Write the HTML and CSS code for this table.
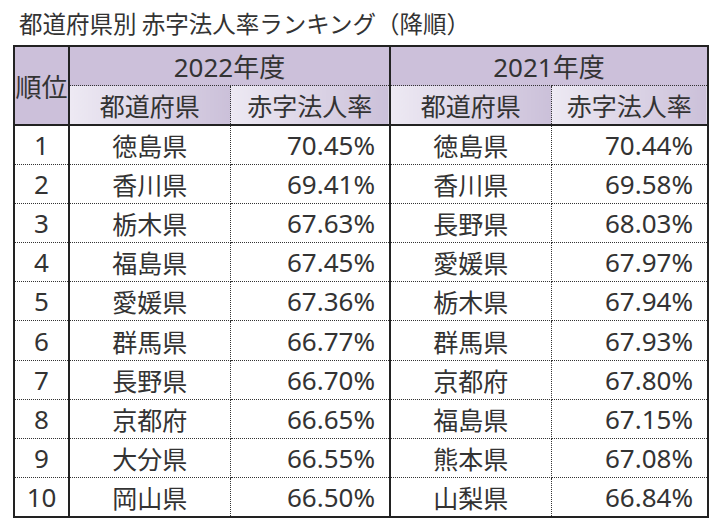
FILE: index.html
```html
<!DOCTYPE html>
<html lang="ja">
<head>
<meta charset="utf-8">
<title>都道府県別 赤字法人率ランキング（降順）</title>
<link rel="stylesheet" href="styles.css">
</head>
<body>
<h1 class="title">都道府県別 赤字法人率ランキング（降順）</h1>
<table class="rank">
  <colgroup>
    <col class="c-no">
    <col class="c-pref">
    <col class="c-rate">
    <col class="c-pref">
    <col class="c-rate2">
  </colgroup>
  <thead>
    <tr class="h1">
      <th class="rankh" rowspan="2">順位</th>
      <th class="year sep" colspan="2">2022年度</th>
      <th class="year" colspan="2">2021年度</th>
    </tr>
    <tr class="h2">
      <th class="sub">都道府県</th>
      <th class="sub sep">赤字法人率</th>
      <th class="sub">都道府県</th>
      <th class="sub">赤字法人率</th>
    </tr>
  </thead>
  <tbody>
    <tr><td class="no">1</td><td class="pref">徳島県</td><td class="rate sep">70.45%</td><td class="pref">徳島県</td><td class="rate">70.44%</td></tr>
    <tr><td class="no">2</td><td class="pref">香川県</td><td class="rate sep">69.41%</td><td class="pref">香川県</td><td class="rate">69.58%</td></tr>
    <tr><td class="no">3</td><td class="pref">栃木県</td><td class="rate sep">67.63%</td><td class="pref">長野県</td><td class="rate">68.03%</td></tr>
    <tr><td class="no">4</td><td class="pref">福島県</td><td class="rate sep">67.45%</td><td class="pref">愛媛県</td><td class="rate">67.97%</td></tr>
    <tr><td class="no">5</td><td class="pref">愛媛県</td><td class="rate sep">67.36%</td><td class="pref">栃木県</td><td class="rate">67.94%</td></tr>
    <tr><td class="no">6</td><td class="pref">群馬県</td><td class="rate sep">66.77%</td><td class="pref">群馬県</td><td class="rate">67.93%</td></tr>
    <tr><td class="no">7</td><td class="pref">長野県</td><td class="rate sep">66.70%</td><td class="pref">京都府</td><td class="rate">67.80%</td></tr>
    <tr><td class="no">8</td><td class="pref">京都府</td><td class="rate sep">66.65%</td><td class="pref">福島県</td><td class="rate">67.15%</td></tr>
    <tr><td class="no">9</td><td class="pref">大分県</td><td class="rate sep">66.55%</td><td class="pref">熊本県</td><td class="rate">67.08%</td></tr>
    <tr><td class="no">10</td><td class="pref">岡山県</td><td class="rate sep">66.50%</td><td class="pref">山梨県</td><td class="rate">66.84%</td></tr>
  </tbody>
</table>
</body>
</html>
```

FILE: styles.css
```css
html, body {
  margin: 0;
  padding: 0;
  background: #ffffff;
}

body {
  font-family: "Noto Sans", "Noto Sans CJK JP", sans-serif;
  color: #333333;
}

.title {
  margin: 0 0 7px 0;
  padding: 8px 0 0 19px;
  font-family: "Noto Sans CJK JP", sans-serif;
  font-size: 23.5px;
  font-weight: normal;
  line-height: 30px;
  color: #333333;
}

.rank {
  margin-left: 13px;
  border-collapse: collapse;
  border: 2px solid #222222;
  table-layout: fixed;
  width: 694px;
}

.c-no { width: 55px; }
.c-pref { width: 161px; }
.c-rate { width: 160px; }
.c-rate2 { width: 157px; }

.rank th,
.rank td {
  padding: 0;
  font-weight: normal;
  font-size: 26px;
  color: #333333;
  vertical-align: middle;
  border: 1px dotted #333333;
}

.rank .h1,
.rank .h2 {
  height: 39.5px;
}

.rank tbody tr {
  height: 39.2px;
}

.rankh {
  font-size: 21px;
  background: #ccc0da;
  border-right: 2px solid #222222 !important;
  border-bottom: 2px solid #222222 !important;
  font-family: "Noto Sans CJK JP", sans-serif;
}

.year {
  background: #ccc0da;
}

.sub {
  background: linear-gradient(to right, #ede9f3, #cbc0d9);
  border-bottom: 2px solid #222222 !important;
  font-family: "Noto Sans CJK JP", sans-serif;
  font-size: 25px !important;
}

.rank .sep {
  border-right: 2px solid #222222;
}

.no {
  text-align: center;
  border-right: 2px solid #222222 !important;
}

.pref {
  text-align: center;
  font-family: "Noto Sans CJK JP", sans-serif;
  font-size: 25px !important;
}

.rate {
  text-align: right;
  padding-right: 14px !important;
}
```
